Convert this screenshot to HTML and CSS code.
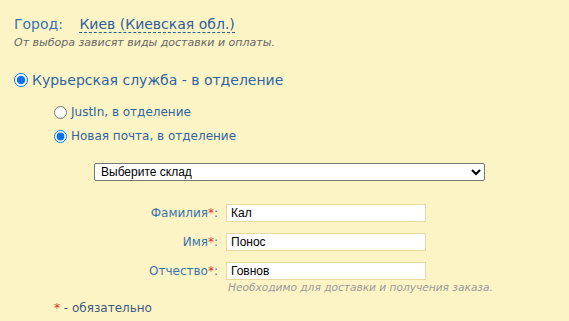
FILE: index.html
```html
<!DOCTYPE html>
<html lang="ru">
<head>
    <meta charset="UTF-8">
    <title>Доставка</title>
    <link rel="stylesheet" href="styles.css">
</head>
<body>
    <div class="order">
        <div class="city">
            <span class="city-label">Город:</span>
            <span class="city-name">Киев (Киевская обл.)</span>
        </div>
        <div class="hint">От выбора зависят виды доставки и оплаты.</div>

        <label class="method">
            <input type="radio" name="method" checked>
            Курьерская служба - в отделение
        </label>

        <div class="carriers">
            <label class="carrier">
                <input type="radio" name="carrier">
                JustIn, в отделение
            </label>
            <label class="carrier">
                <input type="radio" name="carrier" checked>
                Новая почта, в отделение
            </label>
        </div>

        <div class="warehouse">
            <select>
                <option>Выберите склад</option>
            </select>
        </div>

        <div class="fields">
            <label class="field-label" for="last">Фамилия<span class="req">*</span>:</label>
            <input class="field-input" id="last" type="text" value="Кал">
            <label class="field-label" for="first">Имя<span class="req">*</span>:</label>
            <input class="field-input" id="first" type="text" value="Понос">
            <label class="field-label" for="middle">Отчество<span class="req">*</span>:</label>
            <input class="field-input" id="middle" type="text" value="Говнов">
            <div class="field-note">Необходимо для доставки и получения заказа.</div>
        </div>

        <div class="required-note"><span class="req">*</span> - обязательно</div>
    </div>
</body>
</html>
```

FILE: styles.css
```css
html, body {
    margin: 0;
    padding: 0;
    background-color: #fdf4c6;
}
body {
    font-family: "DejaVu Sans", Verdana, sans-serif;
    color: #2f64a3;
}
.order {
    padding: 14px 14px 0 14px;
}
.city {
    font-size: 14px;
    line-height: 20px;
}
.city-label {
    color: #3b73b0;
    margin-right: 12px;
}
.city-name {
    color: #2c5e9c;
    border-bottom: 1px dashed #2c5e9c;
}
.hint {
    font-size: 11px;
    font-style: italic;
    color: #666;
    margin-top: 2px;
}
.method {
    display: flex;
    align-items: center;
    gap: 4px;
    margin-top: 23px;
    font-size: 14px;
    color: #2f64a3;
}
.method input {
    margin: 0;
    width: 14px;
    height: 14px;
    accent-color: #0a73e8;
}
.carrier input {
    margin: 0;
    width: 13px;
    height: 13px;
    accent-color: #0a73e8;
}
.carriers {
    padding-left: 40px;
    margin-top: 12px;
}
.carrier {
    display: flex;
    align-items: center;
    gap: 4px;
    font-size: 12px;
    height: 24px;
}
.warehouse {
    padding-left: 80px;
    margin-top: 13px;
}
.warehouse select {
    width: 391px;
    height: 18px;
    font-family: "Liberation Sans", Arial, sans-serif;
    font-size: 12px;
    border: 1px solid #767676;
    border-radius: 2px;
    background: #fff;
    padding: 0 2px;
}
.fields {
    display: grid;
    grid-template-columns: 204px 200px;
    column-gap: 8px;
    row-gap: 11px;
    margin-top: 23px;
    align-items: center;
}
.field-label {
    text-align: right;
    font-size: 12px;
    color: #3b73b0;
}
.field-input {
    height: 18px;
    box-sizing: border-box;
    border: 1px solid #e8d9a2;
    background: #fff;
    font-family: "Liberation Sans", Arial, sans-serif;
    font-size: 12px;
    padding: 0 4px;
    margin: 0;
}
.field-note {
    grid-column: 2 / span 1;
    margin-top: -10px;
    font-size: 10.6px;
    font-style: italic;
    color: #9a9a9a;
    white-space: nowrap;
    padding-left: 2px;
}
.req {
    color: #e2321b;
}
.required-note {
    font-size: 12px;
    color: #3d5a80;
    margin-top: 8px;
    padding-left: 40px;
}
```
